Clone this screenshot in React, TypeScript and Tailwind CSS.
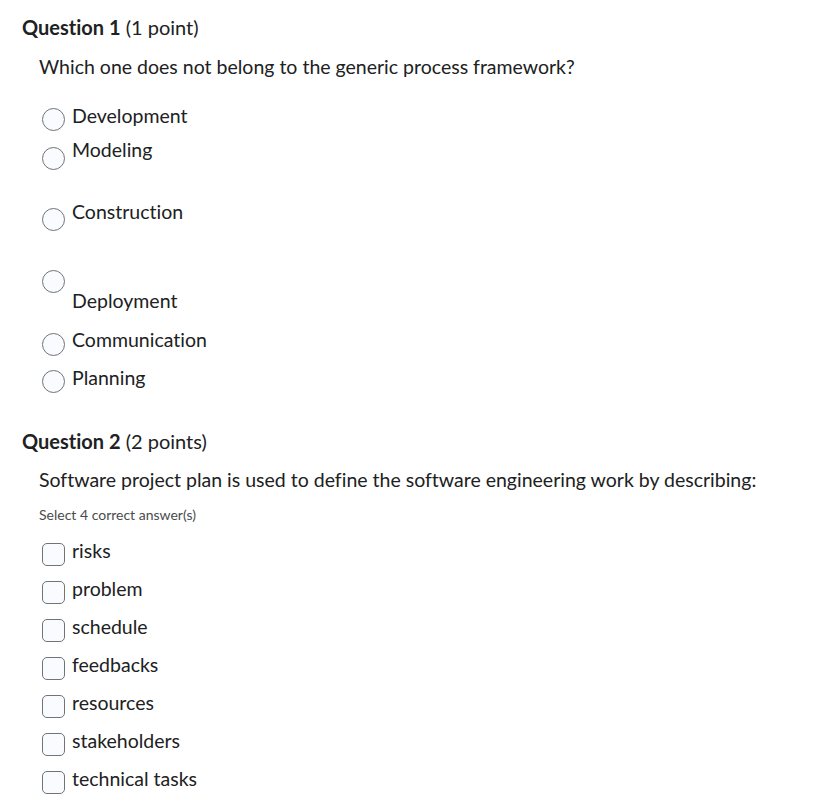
const radioRows = [
  { label: "Development", h: "h-[34px]", circle: "mt-[4px]", text: "mt-0" },
  { label: "Modeling", h: "h-[62px]", circle: "mt-[9px]", text: "mt-0" },
  { label: "Construction", h: "h-[70px]", circle: "mt-[8px]", text: "mt-0" },
  { label: "Deployment", h: "h-[58px]", circle: "mt-0", text: "mt-[19px]" },
  { label: "Communication", h: "h-[38px]", circle: "mt-[5px]", text: "mt-0" },
  { label: "Planning", h: "h-[38px]", circle: "mt-[4px]", text: "mt-0" },
];

const checkRows = ["risks", "problem", "schedule", "feedbacks", "resources", "stakeholders", "technical tasks"];

function QuestionHeader({ num, points }: { num: number; points: string }) {
  return (
    <h2 className="pl-[22px] text-[20px] leading-[24px] text-[#202122]">
      <span className="font-bold">Question {num}</span> ({points})
    </h2>
  );
}

export default function App() {
  return (
    <div
      className="min-h-screen bg-white text-[#202122] [font-variant-ligatures:none]"
      style={{ fontFamily: "Lato, 'Noto Sans', sans-serif" }}
    >
      <section className="pt-[15px]">
        <QuestionHeader num={1} points="1 point" />
        <p className="mt-[16px] pl-[39px] text-[19.5px] leading-[24px]">
          Which one does not belong to the generic process framework?
        </p>
        <ul className="mt-[25px] pl-[42px]">
          {radioRows.map((row) => (
            <li key={row.label} className={`flex items-start gap-[7px] ${row.h}`}>
              <span
                className={`block h-[23px] w-[23px] shrink-0 rounded-full border border-[#6e7477] bg-[#f9fbff] ${row.circle}`}
              />
              <span className={`text-[19.5px] leading-[24px] ${row.text}`}>{row.label}</span>
            </li>
          ))}
        </ul>
      </section>

      <section className="mt-[25px]">
        <QuestionHeader num={2} points="2 points" />
        <p className="mt-[15px] pl-[39px] text-[19.5px] leading-[24px]">
          Software project plan is used to define the software engineering work by describing:
        </p>
        <p className="mt-[15px] pl-[39px] text-[14px] leading-[16px] text-[#494c4e]">
          Select 4 correct answer(s)
        </p>
        <ul className="mt-[16px] pl-[42px]">
          {checkRows.map((label) => (
            <li key={label} className="flex h-[38px] items-start gap-[7px]">
              <span className="mt-[4px] block h-[23px] w-[23px] shrink-0 rounded-[5px] border border-[#6e7477] bg-[#f9fbff]" />
              <span className="text-[19.5px] leading-[24px]">{label}</span>
            </li>
          ))}
        </ul>
      </section>
    </div>
  );
}
